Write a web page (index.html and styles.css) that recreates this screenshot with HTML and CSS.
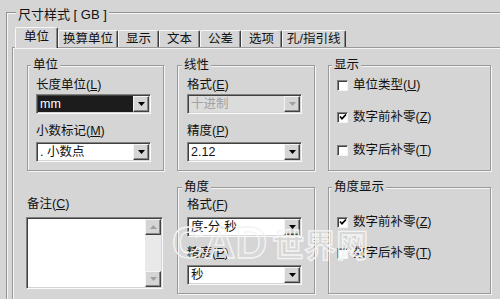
FILE: index.html
```html
<!DOCTYPE html>
<html lang="zh-CN">
<head>
    <meta charset="UTF-8">
    <meta name="viewport" content="width=device-width, initial-scale=1.0">
    <title>尺寸样式</title>
    <link rel="stylesheet" href="styles.css">
</head>
<body>
    <div class="frame">
        <div class="frame-title">尺寸样式 [ GB ]</div>

        <div class="tabs">
            <div class="tab active">单位</div>
            <div class="tab">换算单位</div>
            <div class="tab">显示</div>
            <div class="tab">文本</div>
            <div class="tab">公差</div>
            <div class="tab">选项</div>
            <div class="tab">孔/指引线</div>
        </div>

        <div class="panel">
            <!-- 单位 -->
            <div class="group">
                <div class="group-title">单位</div>
                <div class="label first">长度单位(<u>L</u>)</div>
                <div class="combo selected">
                    <span class="combo-text">mm</span>
                    <span class="combo-btn"><svg width="7" height="4"><path d="M0 0h7L3.5 4z"/></svg></span>
                </div>
                <div class="label">小数标记(<u>M</u>)</div>
                <div class="combo">
                    <span class="combo-text">. 小数点</span>
                    <span class="combo-btn"><svg width="7" height="4"><path d="M0 0h7L3.5 4z"/></svg></span>
                </div>
            </div>

            <!-- 线性 -->
            <div class="group wide-pad">
                <div class="group-title">线性</div>
                <div class="label first">格式(<u>E</u>)</div>
                <div class="combo disabled">
                    <span class="combo-text">十进制</span>
                    <span class="combo-btn"><svg width="7" height="4"><path d="M0 0h7L3.5 4z"/></svg></span>
                </div>
                <div class="label">精度(<u>P</u>)</div>
                <div class="combo">
                    <span class="combo-text">2.12</span>
                    <span class="combo-btn"><svg width="7" height="4"><path d="M0 0h7L3.5 4z"/></svg></span>
                </div>
            </div>

            <!-- 显示 -->
            <div class="group">
                <div class="group-title">显示</div>
                <div class="check-row r1"><span class="check"></span><span>单位类型(<u>U</u>)</span></div>
                <div class="check-row r2"><span class="check"><svg width="8" height="8"><path d="M1 3.5l2 2.2L7 1.5" fill="none" stroke="#000" stroke-width="1.7"/></svg></span><span>数字前补零(<u>Z</u>)</span></div>
                <div class="check-row r3"><span class="check"></span><span>数字后补零(<u>T</u>)</span></div>
            </div>

            <!-- 备注 -->
            <div class="notes">
                <div class="label notes-label">备注(<u>C</u>)</div>
                <div class="memo">
                    <div class="memo-text"></div>
                    <div class="scrollbar">
                        <span class="scroll-btn"><svg width="7" height="4"><path d="M0 4h7L3.5 0z"/></svg></span>
                        <span class="scroll-track"></span>
                        <span class="scroll-btn"><svg width="7" height="4"><path d="M0 0h7L3.5 4z"/></svg></span>
                    </div>
                </div>
            </div>

            <!-- 角度 -->
            <div class="group wide-pad">
                <div class="group-title">角度</div>
                <div class="label angle-first">格式(<u>F</u>)</div>
                <div class="combo angle-combo">
                    <span class="combo-text">度-分-秒</span>
                    <span class="combo-btn"><svg width="7" height="4"><path d="M0 0h7L3.5 4z"/></svg></span>
                </div>
                <div class="label angle-label">精度(<u>P</u>)</div>
                <div class="combo angle-combo">
                    <span class="combo-text">秒</span>
                    <span class="combo-btn"><svg width="7" height="4"><path d="M0 0h7L3.5 4z"/></svg></span>
                </div>
            </div>

            <!-- 角度显示 -->
            <div class="group">
                <div class="group-title">角度显示</div>
                <div class="check-row a1"><span class="check"><svg width="8" height="8"><path d="M1 3.5l2 2.2L7 1.5" fill="none" stroke="#000" stroke-width="1.7"/></svg></span><span>数字前补零(<u>Z</u>)</span></div>
                <div class="check-row a2"><span class="check"></span><span>数字后补零(<u>T</u>)</span></div>
            </div>
        </div>
    </div>

    <div class="watermark"><span class="wm-latin">CAD</span><span class="wm-cjk">世界网</span></div>
</body>
</html>
```
FILE: styles.css
```css
body {
    margin: 0;
    width: 500px;
    height: 299px;
    overflow: hidden;
    position: relative;
    background: #d5d5d5;
    font-family: "Liberation Sans", "Noto Sans CJK SC", sans-serif;
    font-size: 12.5px;
    color: #111;
    text-autospace: no-autospace;
}

u {
    text-decoration-thickness: 1px;
    text-underline-offset: 1px;
}

/* outer group box */
.frame {
    margin: 12px 0 0 6px;
    width: 520px;
    height: 300px;
    padding-left: 5px;
    border: 1px solid #939393;
    box-shadow: inset 1px 1px #f4f4f4, 1px 1px #f4f4f4;
}

.frame-title {
    width: fit-content;
    height: 16px;
    margin: -6px 0 0 4px;
    padding: 0 2px;
    font-size: 13px;
    line-height: 16px;
    background: #d5d5d5;
}

/* tabs */
.tabs {
    display: flex;
    align-items: flex-end;
    height: 21px;
    margin: 4px 0 0 3px;
    position: relative;
    z-index: 1;
}

.tab {
    box-sizing: border-box;
    min-width: 41px;
    height: 17px;
    margin-bottom: 1px;
    padding: 0 4px;
    line-height: 16px;
    text-align: center;
    background: #d5d5d5;
    border-top: 1px solid #f6f6f6;
    border-left: 1px solid #f6f6f6;
    border-right: 1px solid #3c3c3c;
    box-shadow: inset -1px 0 #888;
    border-radius: 2px 2px 0 0;
}

.tab.active {
    width: 43px;
    height: 21px;
    margin-bottom: 0;
    line-height: 19px;
}

.panel {
    margin-top: -1px;
    height: 270px;
    width: 487px;
    padding: 17px 0 0 14px;
    border: 1px solid #9a9a9a;
    box-shadow: inset 1px 1px #f4f4f4;
    display: grid;
    grid-template-columns: 137px 138px 163px;
    grid-template-rows: 106px 107px;
    column-gap: 13px;
    row-gap: 16px;
}

/* group boxes */
.group {
    padding-left: 8px;
    border: 1px solid #9a9a9a;
    box-shadow: inset 1px 1px #f4f4f4, 1px 1px #f4f4f4;
}

.group.wide-pad {
    padding-left: 9px;
}

.group-title {
    width: fit-content;
    height: 14px;
    margin: -8px 0 0 -5px;
    padding: 0 2px;
    line-height: 14px;
    background: #d5d5d5;
}

.label {
    height: 15px;
    line-height: 15px;
    margin-top: 10px;
}

.label.first {
    margin-top: 6px;
}

/* combo boxes */
.combo {
    box-sizing: border-box;
    display: flex;
    width: 115px;
    height: 20px;
    margin-top: 3px;
    padding: 1px;
    background: #fff;
    border: 1px solid;
    border-color: #808080 #fafafa #fafafa #808080;
    box-shadow: inset 1px 1px #404040, inset -1px -1px #d4d4d4;
}

.label.first + .combo {
    margin-top: 1px;
}

.combo-text {
    flex: 1;
    padding-left: 2px;
    line-height: 16px;
}

.combo-btn {
    box-sizing: border-box;
    width: 16px;
    height: 16px;
    display: flex;
    align-items: center;
    justify-content: center;
    background: #d5d5d5;
    border: 1px solid;
    border-color: #f4f4f4 #404040 #404040 #f4f4f4;
    box-shadow: inset -1px -1px #888;
}

.combo.selected .combo-text {
    background: #1c1c1c;
    color: #fff;
}

.combo.disabled {
    background: #dcdcdc;
}

.combo.disabled .combo-text {
    color: #a2a2a2;
}

.combo.disabled svg,
.scroll-btn svg {
    fill: #a0a0a0;
}

.angle-first {
    margin-top: 4px;
}

.angle-label {
    margin-top: 9px;
}

.combo.angle-combo {
    margin-top: 4px;
}

/* check boxes */
.check-row {
    display: flex;
    align-items: center;
    gap: 5px;
    height: 14px;
    line-height: 14px;
}

.check {
    box-sizing: border-box;
    width: 11px;
    height: 11px;
    display: flex;
    align-items: center;
    justify-content: center;
    background: #fff;
    border: 1px solid;
    border-color: #808080 #f4f4f4 #f4f4f4 #808080;
    box-shadow: inset 1px 1px #404040;
}

.r1 { margin-top: 6px; }
.r2 { margin-top: 18px; }
.r3 { margin-top: 19px; }
.a1 { margin-top: 21px; }
.a2 { margin-top: 17px; }

/* notes */
.notes-label {
    margin-top: 10px;
}

.memo {
    box-sizing: border-box;
    display: flex;
    width: 137px;
    height: 72px;
    margin: 5px 0 0 -1px;
    padding: 1px;
    background: #fff;
    border: 1px solid;
    border-color: #808080 #fafafa #fafafa #808080;
    box-shadow: inset 1px 1px #404040, inset -1px -1px #d4d4d4;
}

.memo-text {
    flex: 1;
}

.scrollbar {
    width: 16px;
    display: flex;
    flex-direction: column;
}

.scroll-track {
    flex: 1;
    background: #e9e9e9;
}

.scroll-btn {
    box-sizing: border-box;
    height: 16px;
    display: flex;
    align-items: center;
    justify-content: center;
    background: #d5d5d5;
    border: 1px solid;
    border-color: #f4f4f4 #404040 #404040 #f4f4f4;
    box-shadow: inset -1px -1px #888;
}

/* watermark over the dialog */
.watermark {
    position: absolute;
    left: 172px;
    top: 221px;
    display: flex;
    align-items: flex-start;
    color: rgba(255, 255, 255, 0.1);
    -webkit-text-stroke: 1.3px #f4f4f4;
    pointer-events: none;
}

.wm-latin {
    font-family: "Liberation Sans", sans-serif;
    font-weight: bold;
    font-size: 44px;
    line-height: 44px;
}

.wm-cjk {
    margin: 5px 0 0 5px;
    font-family: "Noto Sans CJK SC", sans-serif;
    font-weight: bold;
    font-size: 32px;
    line-height: 34px;
}
```
